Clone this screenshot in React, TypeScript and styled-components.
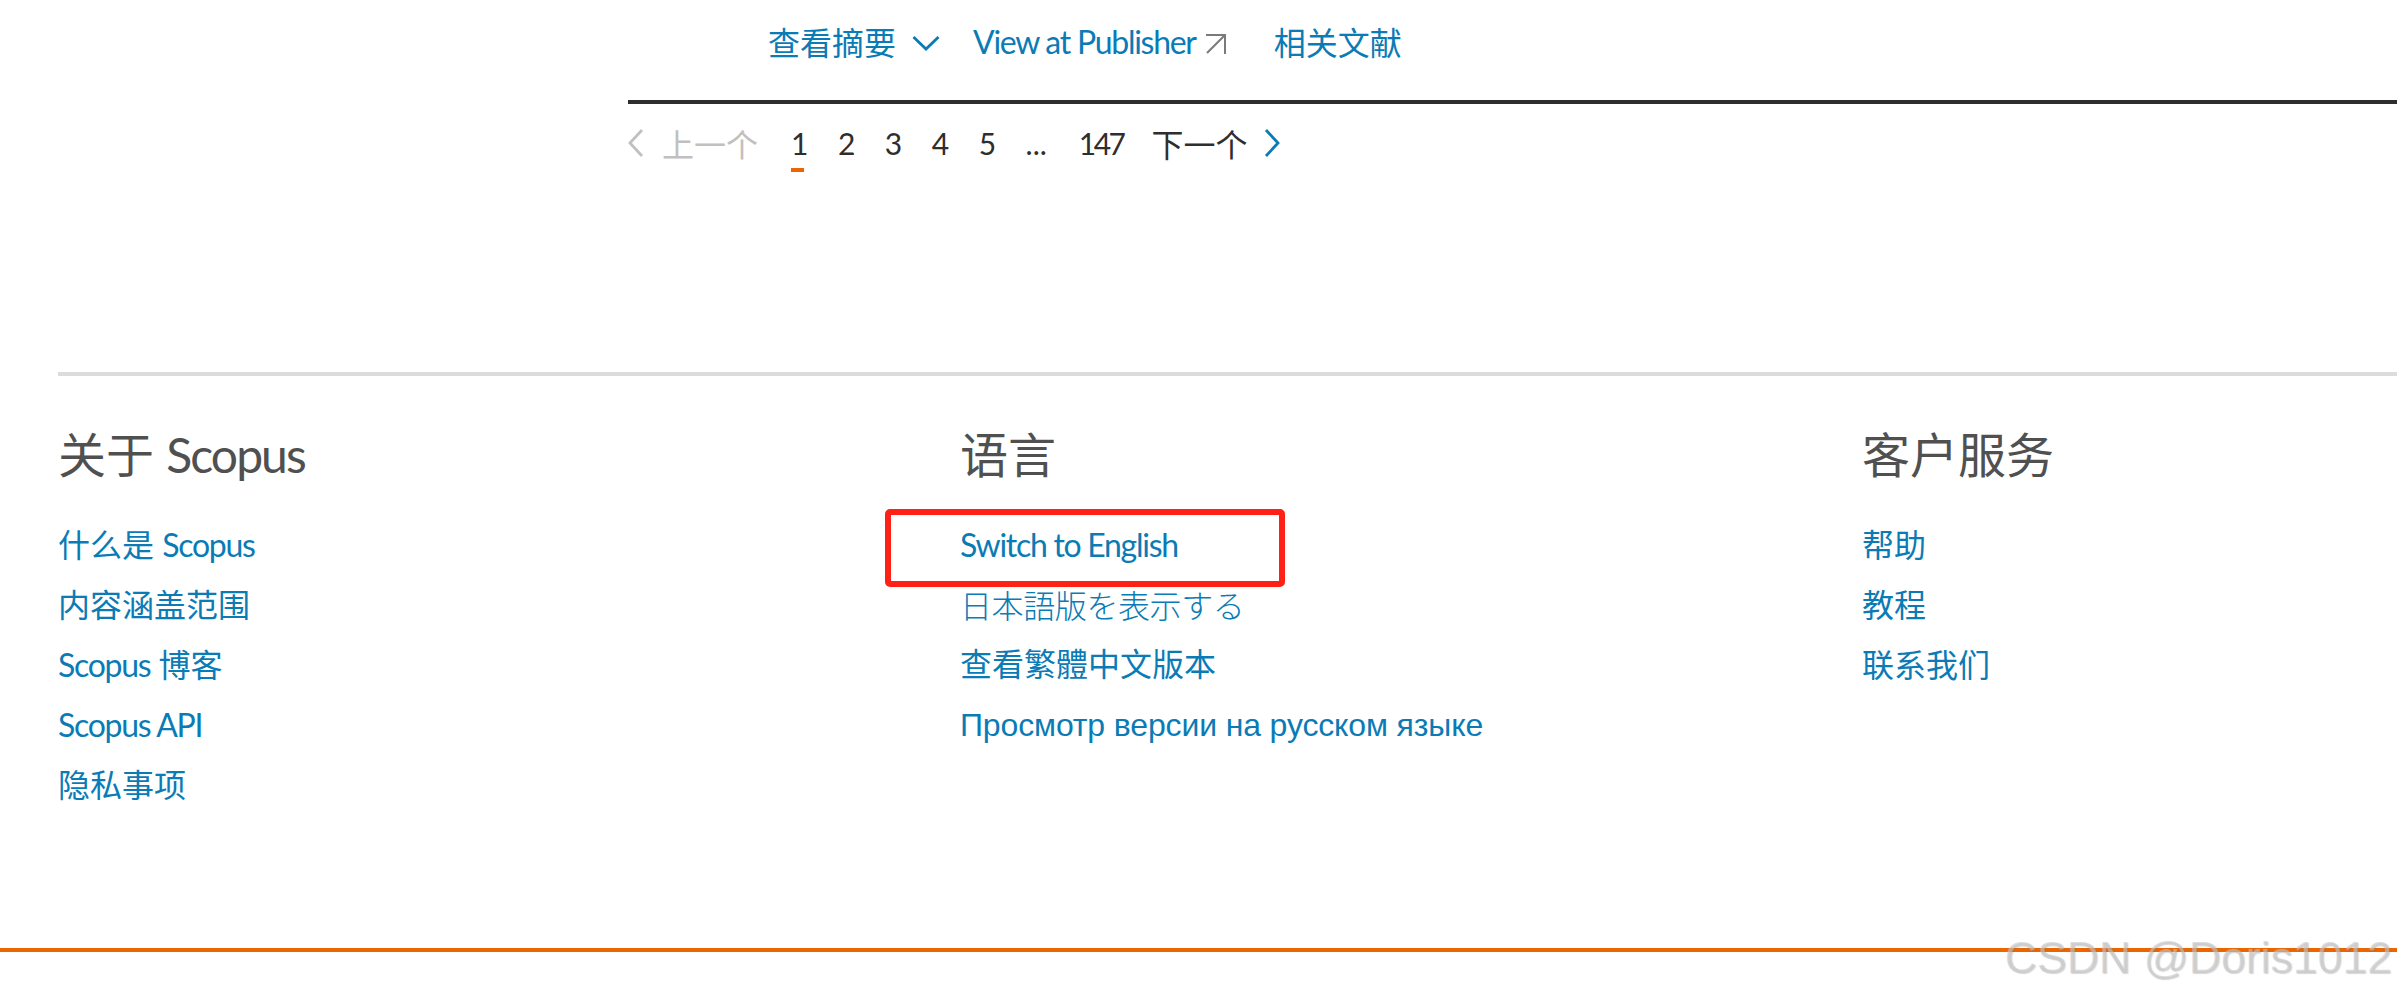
import React from 'react'
import styled, { createGlobalStyle } from 'styled-components'

const GlobalStyle = createGlobalStyle`
    html, body {
        margin: 0;
        padding: 0;
        background: #fff;
    }
    body {
        font-family: Lato, "Noto Sans CJK SC", sans-serif;
    }
`

const pages = ['1', '2', '3', '4', '5', '...', '147']

const ChevronDown = () => (
    <DownIcon viewBox="0 0 28 16">
        <path d="M1.5 2 L14 14 L26.5 2" fill="none" stroke="#0b7bb5" strokeWidth="2.8" />
    </DownIcon>
)

const ExternalArrow = () => (
    <ArrowIcon viewBox="0 0 20 20">
        <path d="M0 1 H19 V20 M19 1 L1 19" fill="none" stroke="#7a7a7a" strokeWidth="2" />
    </ArrowIcon>
)

const Chevron = ({ left, color }: { left?: boolean; color: string }) => (
    <SideIcon viewBox="0 0 16 28">
        <path d={left ? 'M14 1 L2 14 L14 27' : 'M2 1 L14 14 L2 27'} fill="none" stroke={color} strokeWidth="2.8" />
    </SideIcon>
)

const App = () => {
    return (
        <Page>
            <GlobalStyle />
            <Results>
                <Actions>
                    <ActionLink>查看摘要</ActionLink>
                    <ChevronDown />
                    <PublisherLink>
                        <Latin>View at Publisher</Latin>
                        <ExternalArrow />
                    </PublisherLink>
                    <ActionLink>相关文献</ActionLink>
                </Actions>
                <Pagination>
                    <Chevron left color="#c0c0c0" />
                    <PrevLabel>上一个</PrevLabel>
                    <PageList>
                        {pages.map((p, i) => (
                            <PageNumber key={p} $active={i === 0} $dots={p === '...'}>{p}</PageNumber>
                        ))}
                    </PageList>
                    <NextLabel>下一个</NextLabel>
                    <Chevron color="#0b7bb5" />
                </Pagination>
            </Results>

            <Footer>
                <Column>
                    <Heading>关于 <Latin>Scopus</Latin></Heading>
                    <FooterLink>什么是 <Latin>Scopus</Latin></FooterLink>
                    <FooterLink>内容涵盖范围</FooterLink>
                    <FooterLink><Latin>Scopus</Latin> 博客</FooterLink>
                    <FooterLink><Latin>Scopus API</Latin></FooterLink>
                    <FooterLink>隐私事项</FooterLink>
                </Column>
                <Column>
                    <Heading>语言</Heading>
                    <FooterLink>
                        <Latin>Switch to English</Latin>
                        <Highlight />
                    </FooterLink>
                    <JapaneseLink lang="ja">日本語版を表示する</JapaneseLink>
                    <TraditionalLink lang="zh-TW">查看繁體中文版本</TraditionalLink>
                    <RussianLink>Просмотр версии на русском языке</RussianLink>
                </Column>
                <Column>
                    <Heading>客户服务</Heading>
                    <FooterLink>帮助</FooterLink>
                    <FooterLink>教程</FooterLink>
                    <FooterLink>联系我们</FooterLink>
                </Column>
            </Footer>

            <BottomRule />
            <Watermark>CSDN @Doris1012</Watermark>
        </Page>
    )
}

export default App

const Page = styled.div`
    position: relative;
    width: 2397px;
    height: 997px;
    overflow: hidden;
    background: #fff;
`

const Latin = styled.span`
    letter-spacing: -0.04em;
`

const Results = styled.section`
    margin-left: 628px;
    height: 372px;
`

const Actions = styled.div`
    display: flex;
    align-items: center;
    height: 104px;
    padding-left: 140px;
    padding-bottom: 18px;
    box-sizing: border-box;
    border-bottom: 4px solid #2e2e2e;
`

const ActionLink = styled.a`
    color: #0b7bb5;
    font-size: 32px;
`

const DownIcon = styled.svg`
    width: 28px;
    height: 16px;
    margin-left: 16px;
    margin-top: 4px;
`

const PublisherLink = styled.a`
    display: flex;
    align-items: center;
    margin-left: 33px;
    margin-right: 48px;
    color: #0b7bb5;
    font-size: 32px;
`

const ArrowIcon = styled.svg`
    width: 20px;
    height: 20px;
    margin-left: 10px;
    margin-top: 6px;
`

const Pagination = styled.nav`
    display: flex;
    align-items: center;
    height: 78px;
`

const SideIcon = styled.svg`
    width: 16px;
    height: 28px;
`

const PrevLabel = styled.span`
    margin-left: 18px;
    color: #c0c0c0;
    font-size: 32px;
`

const PageList = styled.div`
    display: flex;
    margin-left: 33px;
    gap: 32px;
`

const PageNumber = styled.span<{ $active?: boolean; $dots?: boolean }>`
    position: relative;
    color: #2e2e2e;
    font-size: 30px;
    letter-spacing: ${(p) => (p.$dots ? '0' : '-2.5px')};

    &::after {
        content: '';
        display: ${(p) => (p.$active ? 'block' : 'none')};
        position: absolute;
        left: 0;
        bottom: -11px;
        width: 13px;
        height: 4px;
        background: #eb6500;
    }
`

const NextLabel = styled.span`
    margin-left: 28px;
    margin-right: 16px;
    color: #2e2e2e;
    font-size: 32px;
`

const Footer = styled.footer`
    display: grid;
    grid-template-columns: repeat(3, 902px);
    margin-left: 58px;
    border-top: 4px solid #dcdcdc;
    padding-top: 49px;
`

const Column = styled.div`
    display: flex;
    flex-direction: column;
    align-items: flex-start;
`

const Heading = styled.h2`
    margin: 0 0 30px;
    height: 60px;
    line-height: 60px;
    color: #505050;
    font-size: 48px;
    font-weight: 400;
`

const FooterLink = styled.a`
    position: relative;
    height: 60px;
    line-height: 60px;
    color: #0b7bb5;
    font-size: 32px;
`

const JapaneseLink = styled(FooterLink)`
    font-family: "Noto Sans CJK JP", sans-serif;
    font-weight: 300;
    line-height: 58px;
    letter-spacing: -0.4px;
`

const TraditionalLink = styled(FooterLink)`
    font-family: "Noto Sans CJK TC", sans-serif;
    line-height: 54px;
`

const RussianLink = styled(FooterLink)`
    font-family: "Liberation Sans", sans-serif;
    letter-spacing: -0.14px;
`

const Highlight = styled.span`
    position: absolute;
    left: -75px;
    top: -6px;
    width: 400px;
    height: 78px;
    box-sizing: border-box;
    border: 6px solid #ff2116;
    border-radius: 5px;
`

const BottomRule = styled.div`
    position: absolute;
    left: 0;
    right: 0;
    top: 948px;
    height: 4px;
    background: #eb6500;
`

const Watermark = styled.div`
    position: absolute;
    right: 5px;
    top: 932px;
    font-family: "Liberation Sans", sans-serif;
    font-size: 44.6px;
    line-height: 52px;
    color: rgba(200, 200, 200, 0.6);
    text-shadow: 1px 1px 1px rgba(120, 120, 120, 0.3);
`
